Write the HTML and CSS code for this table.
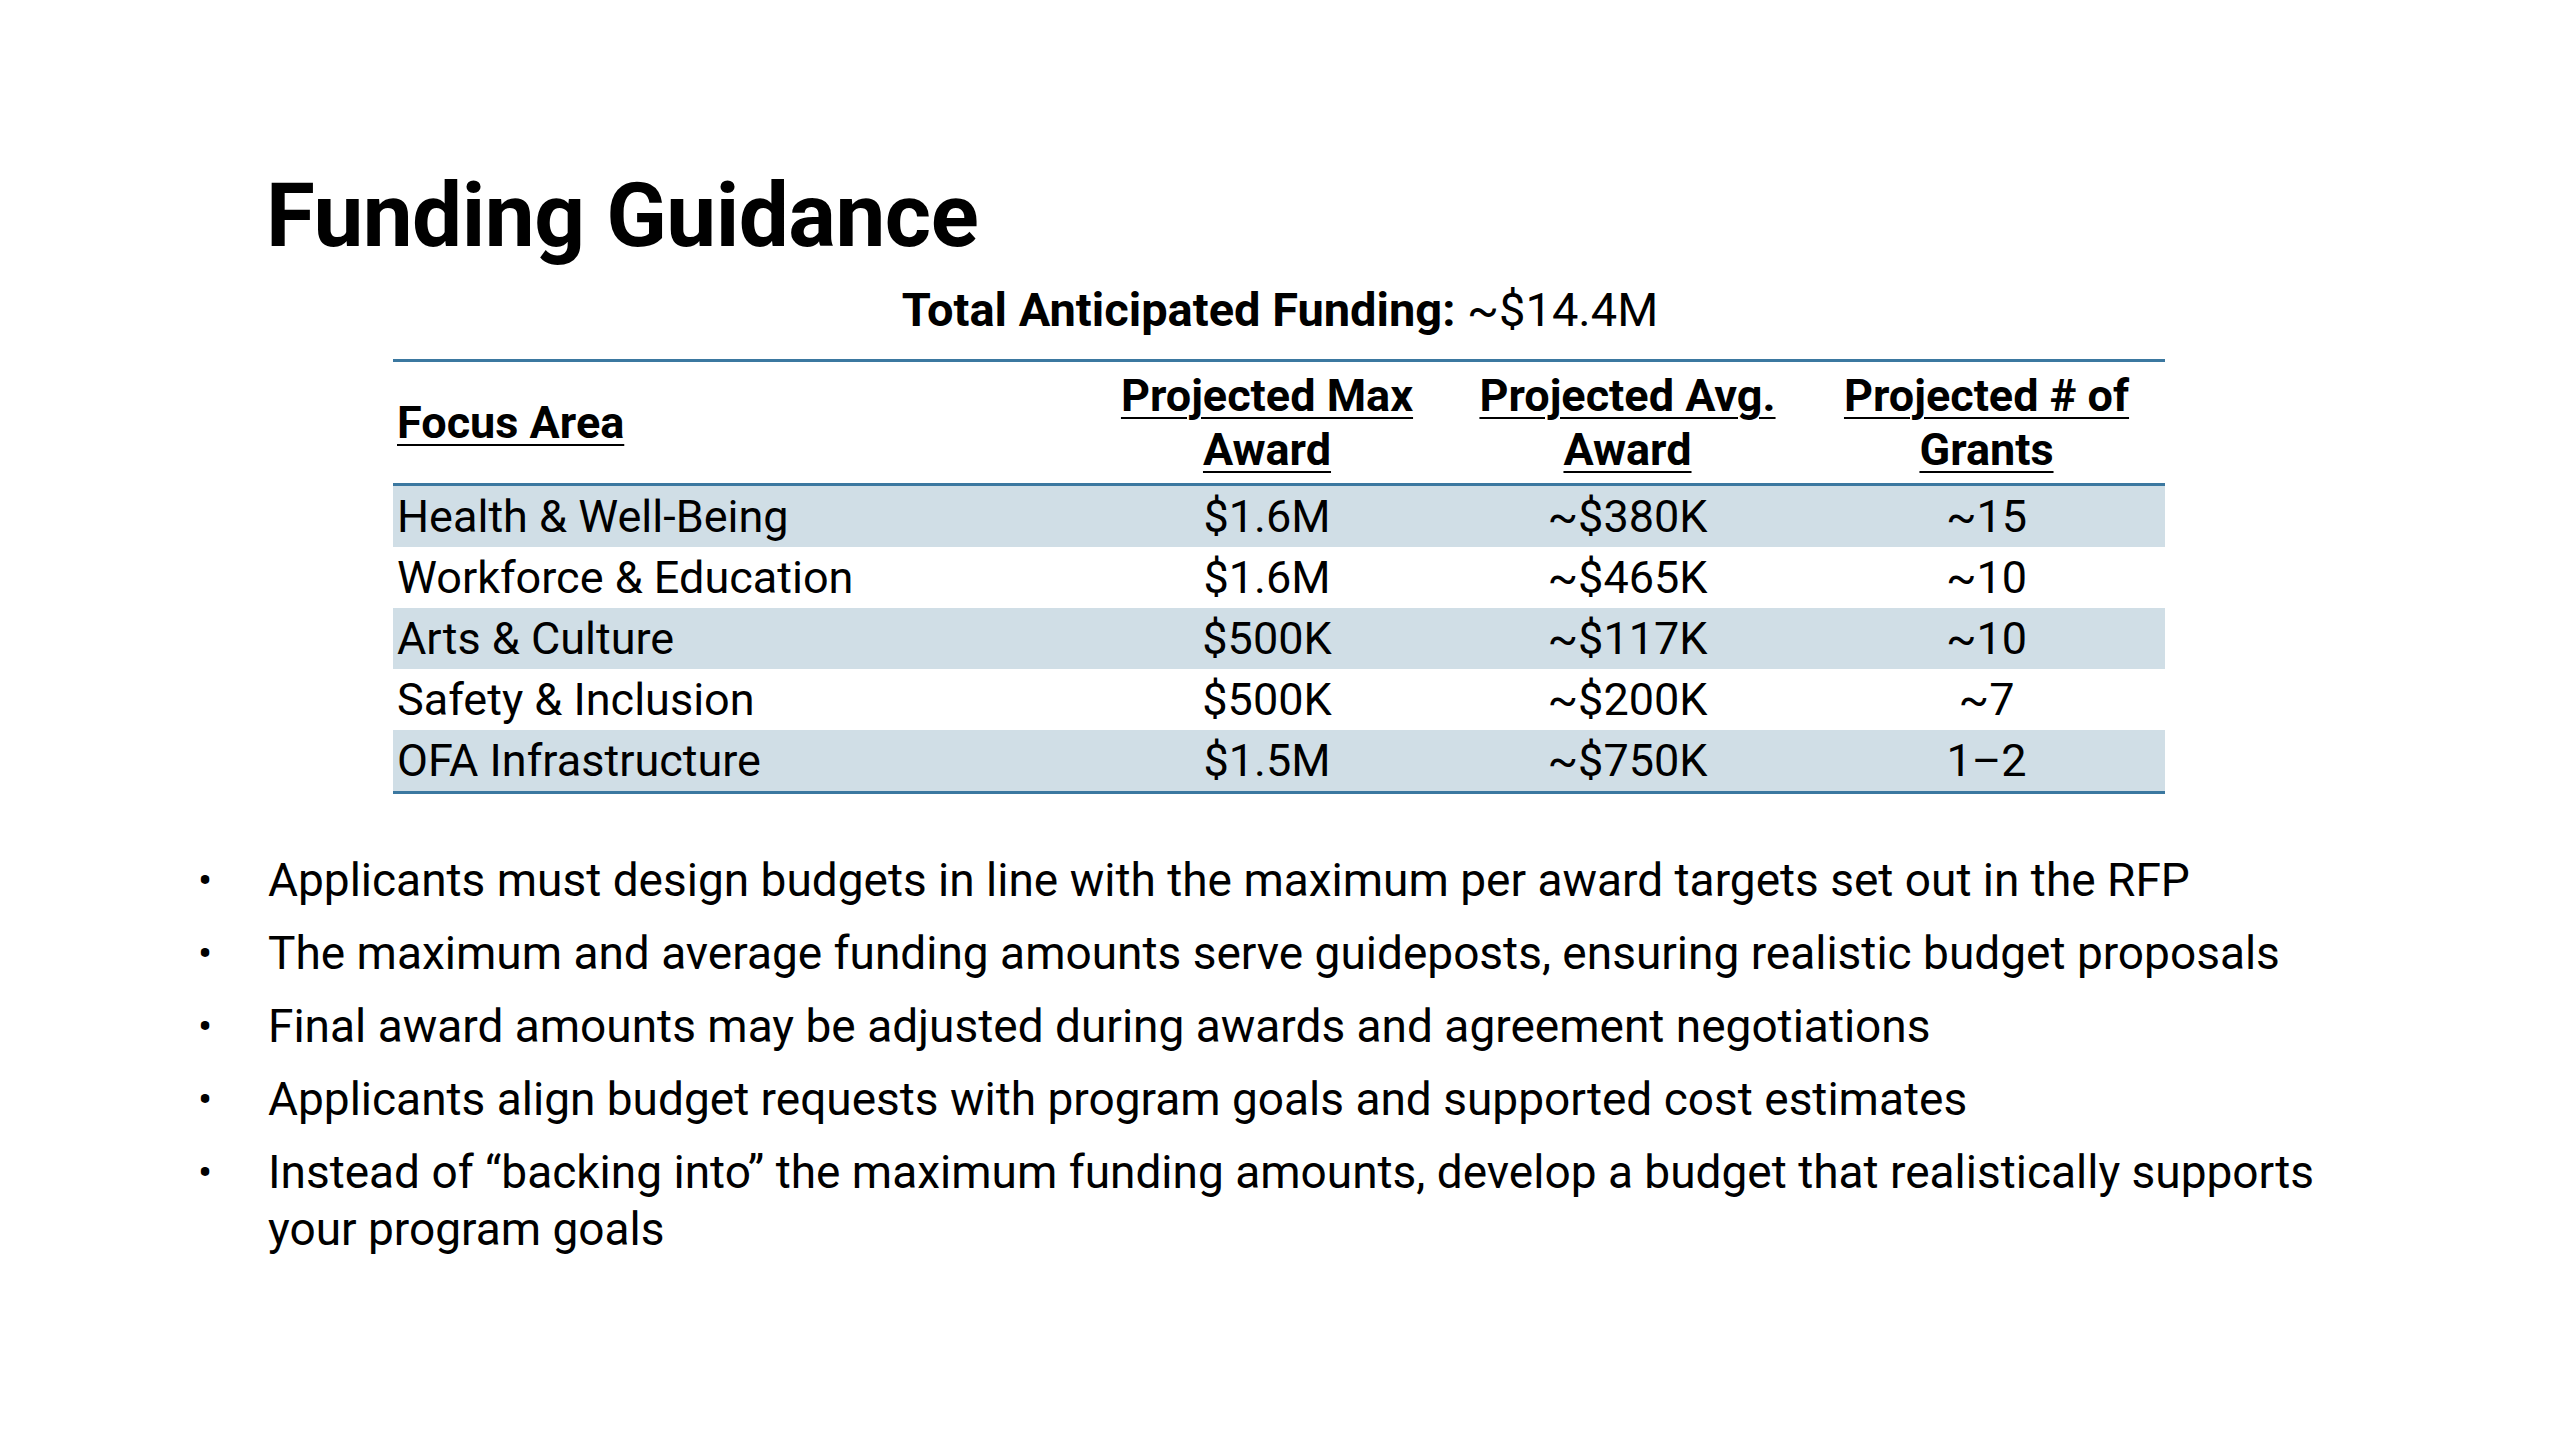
FILE: index.html
```html
<!DOCTYPE html>
<html lang="en">
<head>
<meta charset="utf-8">
<title>Funding Guidance</title>
<link rel="stylesheet" href="styles.css">
</head>
<body>
<main class="slide">
  <h1 class="title">Funding Guidance</h1>
  <p class="total"><strong>Total Anticipated Funding:</strong> ~$14.4M</p>
  <table class="grid">
    <colgroup>
      <col class="c-area">
      <col class="c-max">
      <col class="c-avg">
      <col class="c-num">
    </colgroup>
    <thead>
      <tr>
        <th class="left"><span>Focus Area</span></th>
        <th><span>Projected Max</span><br><span>Award</span></th>
        <th><span>Projected Avg.</span><br><span>Award</span></th>
        <th><span>Projected # of</span><br><span>Grants</span></th>
      </tr>
    </thead>
    <tbody>
      <tr class="shade"><td class="left">Health &amp; Well-Being</td><td>$1.6M</td><td>~$380K</td><td>~15</td></tr>
      <tr><td class="left">Workforce &amp; Education</td><td>$1.6M</td><td>~$465K</td><td>~10</td></tr>
      <tr class="shade"><td class="left">Arts &amp; Culture</td><td>$500K</td><td>~$117K</td><td>~10</td></tr>
      <tr><td class="left">Safety &amp; Inclusion</td><td>$500K</td><td>~$200K</td><td>~7</td></tr>
      <tr class="shade"><td class="left">OFA Infrastructure</td><td>$1.5M</td><td>~$750K</td><td>1–2</td></tr>
    </tbody>
  </table>
  <ul class="notes">
    <li>Applicants must design budgets in line with the maximum per award targets set out in the RFP</li>
    <li>The maximum and average funding amounts serve guideposts, ensuring realistic budget proposals</li>
    <li>Final award amounts may be adjusted during awards and agreement negotiations</li>
    <li>Applicants align budget requests with program goals and supported cost estimates</li>
    <li>Instead of “backing into” the maximum funding amounts, develop a budget that realistically supports your program goals</li>
  </ul>
</main>
</body>
</html>
```

FILE: styles.css
```css
html, body {
  margin: 0;
  padding: 0;
  background: #ffffff;
}

.slide {
  width: 2560px;
  height: 1440px;
  box-sizing: border-box;
  padding-top: 167px;
  font-family: Roboto, "Liberation Sans", Arial, sans-serif;
  color: #000000;
  display: flex;
  flex-direction: column;
}

.title {
  margin: 0 0 0 266px;
  font-size: 89px;
  font-weight: 700;
  line-height: 1.1;
  letter-spacing: -0.5px;
}

.total {
  margin: 17px 0 0 0;
  text-align: center;
  font-size: 47px;
  line-height: 1.2;
}

.total strong {
  font-weight: 700;
}

.grid {
  margin: 21px 0 0 393px;
  width: 1772px;
  border-collapse: collapse;
  table-layout: fixed;
  font-size: 45px;
}

.c-area { width: 694px; }
.c-max { width: 360px; }
.c-avg { width: 361px; }
.c-num { width: 357px; }

.grid thead tr {
  border-top: 3px solid #3b78a0;
  border-bottom: 3px solid #3b78a0;
  height: 124px;
}

.grid th {
  font-weight: 700;
  line-height: 54px;
  text-align: center;
  vertical-align: middle;
  padding: 0;
}

.grid th span {
  text-decoration: underline;
  text-decoration-thickness: 2px;
  text-underline-offset: 6px;
}

.grid td {
  height: 61px;
  padding: 0;
  text-align: center;
  vertical-align: middle;
  line-height: 61px;
}

.grid .left {
  text-align: left;
  padding-left: 4px;
}

.grid tbody tr.shade {
  background: #d0dee6;
}

.grid tbody tr:last-child {
  border-bottom: 3px solid #3b78a0;
}

.notes {
  list-style: none;
  margin: 58px 0 0 0;
  padding: 0 0 0 198px;
  width: 2180px;
  font-size: 46px;
  line-height: 57px;
}

.notes li {
  display: grid;
  grid-template-columns: 70px 1fr;
  margin-bottom: 16px;
}

.notes li::before {
  content: "•";
  font-size: 42px;
}
```
